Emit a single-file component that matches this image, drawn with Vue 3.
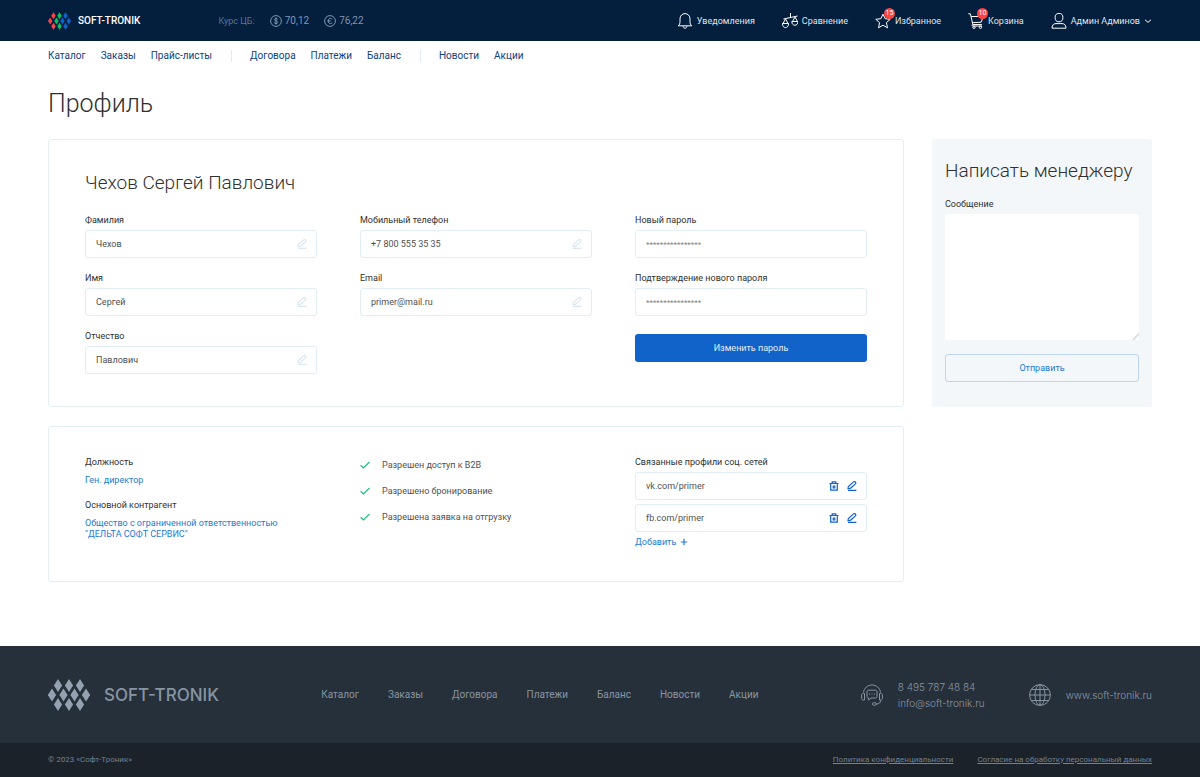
<script setup>
import { ref } from 'vue'

const menuGroups = [
  ['Каталог', 'Заказы', 'Прайс-листы'],
  ['Договора', 'Платежи', 'Баланс'],
  ['Новости', 'Акции']
]
const footerMenu = ['Каталог', 'Заказы', 'Договора', 'Платежи', 'Баланс', 'Новости', 'Акции']

const columns = ref([
  [
    { id: 'surname', label: 'Фамилия', value: 'Чехов', type: 'text' },
    { id: 'name', label: 'Имя', value: 'Сергей', type: 'text' },
    { id: 'patronymic', label: 'Отчество', value: 'Павлович', type: 'text' }
  ],
  [
    { id: 'phone', label: 'Мобильный телефон', value: '+7 800 555 35 35', type: 'tel' },
    { id: 'email', label: 'Email', value: 'primer@mail.ru', type: 'email' }
  ]
])
const passwords = ref([
  { id: 'new-password', label: 'Новый пароль', value: '' },
  { id: 'confirm-password', label: 'Подтверждение нового пароля', value: '' }
])
const permissions = ['Разрешен доступ к B2B', 'Разрешено бронирование', 'Разрешена заявка на отгрузку']
const socials = ref(['vk.com/primer', 'fb.com/primer'])
const message = ref('')

const diamonds = [
  { x: 4, y: 16, c: 'red' }, { x: 10, y: 6.5, c: 'red' }, { x: 10, y: 25.5, c: 'red' },
  { x: 15.5, y: 16, c: 'green' }, { x: 21, y: 6.5, c: 'green' }, { x: 21, y: 25.5, c: 'green' },
  { x: 26.5, y: 16, c: 'blue' }, { x: 32, y: 6.5, c: 'blue' }, { x: 32, y: 25.5, c: 'blue' },
  { x: 38, y: 16, c: 'blue' }
]
const rhombus = (d) => `M${d.x} ${d.y - 6.5}L${d.x + 4.1} ${d.y}L${d.x} ${d.y + 6.5}L${d.x - 4.1} ${d.y}Z`
</script>

<template>
  <div class="page">
    <header class="topbar">
      <a href="#" class="brand">
        <svg class="brand-mark" viewBox="0 0 42 32" aria-hidden="true">
          <path v-for="(d, i) in diamonds" :key="i" :d="rhombus(d)" :class="d.c" />
        </svg>
        <span>SOFT-TRONIK</span>
      </a>
      <div class="rates">
        <span class="rates-label">Курс ЦБ:</span>
        <span class="rate">
          <svg viewBox="0 0 12 12" aria-hidden="true">
            <circle cx="6" cy="6" r="5.4" />
            <path d="M7.7 4.5C7.5 3.8 6.9 3.4 6 3.4C5 3.4 4.4 3.9 4.4 4.6C4.4 6.2 7.7 5.6 7.7 7.4C7.7 8.2 7 8.6 6 8.6C5 8.6 4.4 8.2 4.3 7.4M6 2.5V9.5" />
          </svg>
          70,12
        </span>
        <span class="rate">
          <svg viewBox="0 0 12 12" aria-hidden="true">
            <circle cx="6" cy="6" r="5.4" />
            <path d="M8.2 4.3C7.7 3.7 7.1 3.4 6.4 3.4C5.1 3.4 4.2 4.5 4.2 6C4.2 7.5 5.1 8.6 6.4 8.6C7.1 8.6 7.7 8.3 8.2 7.7M3.4 6H6.8" />
          </svg>
          76,22
        </span>
      </div>
      <nav class="tools" aria-label="Личное меню">
        <a href="#" class="tool">
          <svg viewBox="0 0 16 16" aria-hidden="true">
            <path d="M1.3 12.8H14.7C13.4 11.6 13 10.400 13 8.600V5.800C13 2.800 10.800 .6 8 .6S3 2.800 3 5.800V8.600C3 10.400 2.600 11.600 1.300 12.800ZM6.100 13.200C6.300 14.600 7 15.200 8 15.200S9.700 14.600 9.900 13.200" />
          </svg>
          <span>Уведомления</span>
        </a>
        <a href="#" class="tool">
          <svg viewBox="0 0 16 16" aria-hidden="true">
            <path d="M8.500 0V5M1.500 6L15.500 3M3.500 6L1 10.500M3.500 6L6 10.500M13 4L10.500 8.500M13 4L15.500 8.500M.4 10.500H6.600C6.600 16 .4 16 .4 10.500ZM9.800 8.500H16C16 13.500 9.800 13.500 9.800 8.500Z" />
          </svg>
          <span>Сравнение</span>
        </a>
        <a href="#" class="tool">
          <svg viewBox="0 0 16 16" aria-hidden="true">
            <path d="M8 1.200L10.100 5.700L15.200 6.300L11.400 9.700L12.500 14.800L8 12.200L3.500 14.800L4.600 9.700L.8 6.300L5.900 5.700Z" />
          </svg>
          <span class="badge">15</span>
          <span>Избранное</span>
        </a>
        <a href="#" class="tool">
          <svg viewBox="0 0 16 16" aria-hidden="true">
            <path d="M.3 .8H2.400L4.800 11.500H13.800M3.200 3.500H15L13.200 9.200L4.300 9.700M4.800 11.500C3.800 11.700 3.800 13 5 13H14" />
            <circle cx="6" cy="14.300" r="1.200" /><circle cx="12.500" cy="14.300" r="1.200" />
          </svg>
          <span class="badge">10</span>
          <span>Корзина</span>
        </a>
        <a href="#" class="tool">
          <svg viewBox="0 0 16 16" aria-hidden="true">
            <ellipse cx="8" cy="4.600" rx="3.900" ry="4.200" />
            <path d="M1 15.200C1 11.800 2.800 10.600 5 10.600H11C13.200 10.600 15 11.800 15 15.200Z" />
          </svg>
          <span>Админ Админов</span>
          <svg class="chevron" viewBox="0 0 8 8" aria-hidden="true"><path d="M1 2.800L4 5.400L7 2.800" /></svg>
        </a>
      </nav>
    </header>

    <nav class="menu" aria-label="Основное меню">
      <div v-for="(group, i) in menuGroups" :key="i" class="menu-group">
        <a v-for="item in group" :key="item" href="#">{{ item }}</a>
      </div>
    </nav>

    <main class="content">
      <h1>Профиль</h1>
      <div class="layout">
        <section class="card profile">
          <h2>Чехов Сергей Павлович</h2>
          <div class="columns">
            <div v-for="(column, i) in columns" :key="i" class="column">
              <div v-for="field in column" :key="field.id" class="field">
                <label :for="field.id">{{ field.label }}</label>
                <div class="box">
                  <input :id="field.id" v-model="field.value" :type="field.type" />
                  <button type="button" class="icon pale" :aria-label="'Изменить: ' + field.label">
                    <svg viewBox="0 0 10 10"><path d="M1 7.500L1.400 5.500L6.200 1.100C7 .4 8.200 .6 8.600 1.300C9 2 8.800 2.600 8.200 3.100L3.400 7.300L1 7.500ZM1 9.400H9.300" /></svg>
                  </button>
                </div>
              </div>
            </div>
            <form class="column" @submit.prevent>
              <div v-for="field in passwords" :key="field.id" class="field">
                <label :for="field.id">{{ field.label }}</label>
                <div class="box">
                  <input :id="field.id" v-model="field.value" type="password" placeholder="****************" />
                </div>
              </div>
              <button type="submit" class="primary">Изменить пароль</button>
            </form>
          </div>
        </section>

        <form class="manager" @submit.prevent>
          <h2>Написать менеджеру</h2>
          <label for="message">Сообщение</label>
          <textarea id="message" v-model="message"></textarea>
          <button type="submit" class="outline">Отправить</button>
        </form>

        <section class="card details">
          <div class="columns">
            <dl class="facts">
              <dt>Должность</dt>
              <dd><a href="#">Ген. директор</a></dd>
              <dt>Основной контрагент</dt>
              <dd><a href="#">Общество с ограниченной ответственностью<br />"ДЕЛЬТА СОФТ СЕРВИС"</a></dd>
            </dl>
            <ul class="permissions">
              <li v-for="item in permissions" :key="item">
                <svg viewBox="0 0 10 8" aria-hidden="true"><path d="M.6 4.200L3.400 6.900L9.400 1" /></svg>
                {{ item }}
              </li>
            </ul>
            <div class="socials">
              <h3>Связанные профили соц. сетей</h3>
              <div v-for="(link, i) in socials" :key="i" class="box">
                <input v-model="socials[i]" type="text" :aria-label="'Профиль ' + (i + 1)" />
                <button type="button" class="icon" aria-label="Удалить">
                  <svg viewBox="0 0 10 10"><path d="M.5 2.500H9.500M3.200 2.200V.8H6.800V2.200M1.700 2.600V9.200H8.300V2.600M4.200 5H5.800V7H4.200Z" /></svg>
                </button>
                <button type="button" class="icon" aria-label="Изменить">
                  <svg viewBox="0 0 10 10"><path d="M1 7.500L1.400 5.500L6.200 1.100C7 .4 8.200 .6 8.600 1.300C9 2 8.800 2.600 8.200 3.100L3.400 7.300L1 7.500ZM1 9.400H9.300" /></svg>
                </button>
              </div>
              <button type="button" class="add">
                Добавить
                <svg viewBox="0 0 8 8" aria-hidden="true"><path d="M4 .8V7.200M.8 4H7.200" /></svg>
              </button>
            </div>
          </div>
        </section>
      </div>
    </main>

    <footer>
      <div class="footer-main">
        <a href="#" class="footer-brand">
          <svg viewBox="0 0 42 32" aria-hidden="true">
            <path v-for="(d, i) in diamonds" :key="i" :d="rhombus(d)" />
          </svg>
          <span>SOFT-TRONIK</span>
        </a>
        <nav class="footer-menu" aria-label="Меню в подвале">
          <a v-for="item in footerMenu" :key="item" href="#">{{ item }}</a>
        </nav>
        <div class="contacts">
          <div class="contact">
            <svg viewBox="0 0 22 22" aria-hidden="true">
              <path d="M2.500 8.500C3 4 6.500 1 11 1S19 4 19.500 8.500M2.700 9.500H2.200C1.200 9.500 .6 10.200 .6 11.200V14.300C.6 15.300 1.200 16 2.200 16H3.500V9.500ZM19.300 9.500H19.800C20.800 9.500 21.400 10.200 21.400 11.200V14.300C21.400 15.300 20.800 16 19.800 16H18.500V9.500ZM19.500 16.500C19.500 19 18 20 15.500 20M12.500 18.800H14.200C15.800 18.800 15.800 21.200 14.200 21.200H12.500C10.900 21.200 10.900 18.800 12.500 18.800ZM7.500 6.200H14.500C15.500 6.200 16 6.700 16 7.700V12.500C16 13.500 15.500 14 14.500 14H10L7.500 16V14C6.500 14 6 13.500 6 12.500V7.700C6 6.700 6.500 6.200 7.500 6.200ZM8 10H9M10.500 10H11.500M13 10H14" />
            </svg>
            <div class="contact-lines">
              <a href="tel:84957874884">8 495 787 48 84</a>
              <a href="mailto:info@soft-tronik.ru">info@soft-tronik.ru</a>
            </div>
          </div>
          <div class="contact">
            <svg viewBox="0 0 22 22" aria-hidden="true">
              <circle cx="11" cy="11" r="10.400" /><ellipse cx="11" cy="11" rx="5" ry="10.400" />
              <path d="M11 .6V21.400M.6 11H21.400M2.200 5.500H19.800M2.200 16.500H19.800" />
            </svg>
            <a href="#">www.soft-tronik.ru</a>
          </div>
        </div>
      </div>
      <div class="footer-bottom">
        <span>© 2023 «Софт-Троник»</span>
        <div class="legal">
          <a href="#">Политика конфиденциальности</a>
          <a href="#">Согласие на обработку персональный данных</a>
        </div>
      </div>
    </footer>
  </div>
</template>

<style>
body { background: #fff; }
</style>

<style scoped>
.page {
  min-height: 100vh;
  display: flex;
  flex-direction: column;
  font-family: Roboto, Inter, "Liberation Sans", sans-serif;
  font-size: 9px;
  line-height: 12px;
  color: #303030;
}
.page *, .page *::before { box-sizing: border-box; }
a { color: inherit; text-decoration: none; }
h1, h2, h3, dl, dd, ul { margin: 0; padding: 0; }
button, input, textarea { font: inherit; color: inherit; margin: 0; }
button { cursor: pointer; }
svg { display: block; flex: none; fill: none; stroke: currentColor; }

.topbar {
  display: flex;
  align-items: center;
  height: 41px;
  padding: 0 48px;
  background: #041e3e;
  color: #dfe5ec;
}
.brand { display: flex; align-items: center; gap: 7px; font-size: 10px; font-weight: 500; color: #fff; }
.brand-mark { width: 23px; height: 18px; stroke: none; }
.red { fill: #ff4242; }
.green { fill: #0fbf62; }
.blue { fill: #1263c9; }
.rates { display: flex; align-items: center; gap: 15px; margin-left: 78px; color: #7d97b8; font-size: 10px; }
.rates-label { font-size: 9px; color: #5c7594; }
.rate { display: flex; align-items: center; gap: 3px; }
.rate svg { width: 12px; height: 12px; }
.tools { display: flex; gap: 27px; margin-left: auto; }
.tool { position: relative; display: flex; align-items: center; gap: 4px; }
.tool svg { width: 16px; height: 16px; stroke: #fff; }
.tool .chevron { width: 8px; height: 8px; }
.badge {
  position: absolute;
  left: 9px;
  top: -5px;
  width: 11px;
  height: 11px;
  border-radius: 50%;
  background: #ff4242;
  color: #fff;
  font-size: 7px;
  line-height: 11px;
  text-align: center;
}

.menu { display: flex; padding: 9px 48px; color: #0c427f; font-size: 10px; }
.menu-group { display: flex; gap: 15px; }
.menu-group + .menu-group { margin-left: 19px; padding-left: 18px; border-left: 1px solid #e1ebf0; }

.content { flex: 1; padding: 17px 48px 64px; }
h1 { font-size: 25px; line-height: 32px; font-weight: 300; margin-bottom: 19px; }
h2 { font-size: 19px; line-height: 24px; font-weight: 300; }
.layout { display: grid; grid-template-columns: minmax(0, 1fr) 220px; gap: 19px 28px; }
.card { border: 1px solid #e4eff4; border-radius: 3px; padding: 31px 36px 32px; }
.columns { display: grid; grid-template-columns: repeat(3, minmax(0, 1fr)); gap: 43px; }
.profile h2 { margin-bottom: 19px; }
.column { display: flex; flex-direction: column; gap: 14px; }
label, h3, dt { display: block; font-size: 9px; line-height: 12px; font-weight: 400; }
.field { display: flex; flex-direction: column; gap: 4px; }
.box {
  display: flex;
  align-items: center;
  gap: 8px;
  height: 28px;
  padding: 0 9px 0 10px;
  border: 1px solid #e1eef4;
  border-radius: 3px;
}
.box input {
  flex: 1;
  min-width: 0;
  padding: 0;
  border: 0;
  outline: 0;
  background: none;
  color: #505050;
}
.box input::placeholder { color: #808080; opacity: 1; font-size: 8px; }
.icon { padding: 0; border: 0; background: none; color: #1263c9; }
.icon svg { width: 10px; height: 10px; stroke-width: 1.2; }
.icon.pale { color: #dbe6f0; }
.primary, .outline { height: 28px; padding: 0; border-radius: 3px; font-size: 9px; }
.primary { margin-top: 4px; border: 0; background: #1263c9; color: #e3edf9; }
.manager {
  display: flex;
  flex-direction: column;
  padding: 20px 13px 25px;
  border-radius: 3px;
  background: #f3f7fa;
}
.manager h2 { margin-bottom: 15px; }
.manager textarea {
  height: 126px;
  margin: 4px 0 14px;
  padding: 8px;
  border: 0;
  border-radius: 3px;
  background: #fff;
  resize: vertical;
}
.manager textarea::-webkit-resizer { background: linear-gradient(135deg, #fff 74%, #dde2e6 74%, #dde2e6 86%, #fff 86%); }
.outline { border: 1px solid #bdd6f1; background: none; color: #2579d8; }

.details { padding: 29px 36px 30px; min-height: 156px; }
.facts a, .add { color: #2579d8; }
.facts dd { margin: 7px 0 0; line-height: 11px; }
.facts dd + dt { margin-top: 13px; }
.permissions { display: flex; flex-direction: column; gap: 14px; padding-top: 3px; list-style: none; color: #505050; }
.permissions li { display: flex; align-items: center; gap: 12px; }
.permissions svg { width: 10px; height: 8px; stroke: #19c37d; stroke-width: 1.2; }
.socials { display: flex; flex-direction: column; align-items: stretch; gap: 4px; }
.add { display: flex; align-items: center; align-self: flex-start; gap: 4px; padding: 0; border: 0; background: none; }
.add svg { width: 8px; height: 8px; stroke-width: 1.2; }

footer { background: #26303a; color: #8795a3; }
.footer-main { display: flex; align-items: center; justify-content: space-between; height: 97px; padding: 0 48px; font-size: 10px; }
.footer-brand { display: flex; align-items: center; gap: 14px; font-family: Inter, sans-serif; font-size: 17px; font-weight: 500; }
.footer-brand svg { width: 42px; height: 32px; fill: #93a1b0; stroke: none; }
.footer-menu { display: flex; gap: 29px; }
.contacts { display: flex; gap: 44px; font-family: Inter, sans-serif; font-weight: 300; }
.contact { display: flex; align-items: center; gap: 15px; }
.contact svg { width: 22px; height: 22px; }
.contact-lines { display: flex; flex-direction: column; gap: 4px; }
.footer-bottom {
  display: flex;
  align-items: center;
  justify-content: space-between;
  height: 34px;
  padding: 0 48px;
  background: #1b222a;
  color: #73808d;
  font-size: 8px;
}
.legal { display: flex; gap: 24px; }
.legal a { text-decoration: underline; }
</style>
